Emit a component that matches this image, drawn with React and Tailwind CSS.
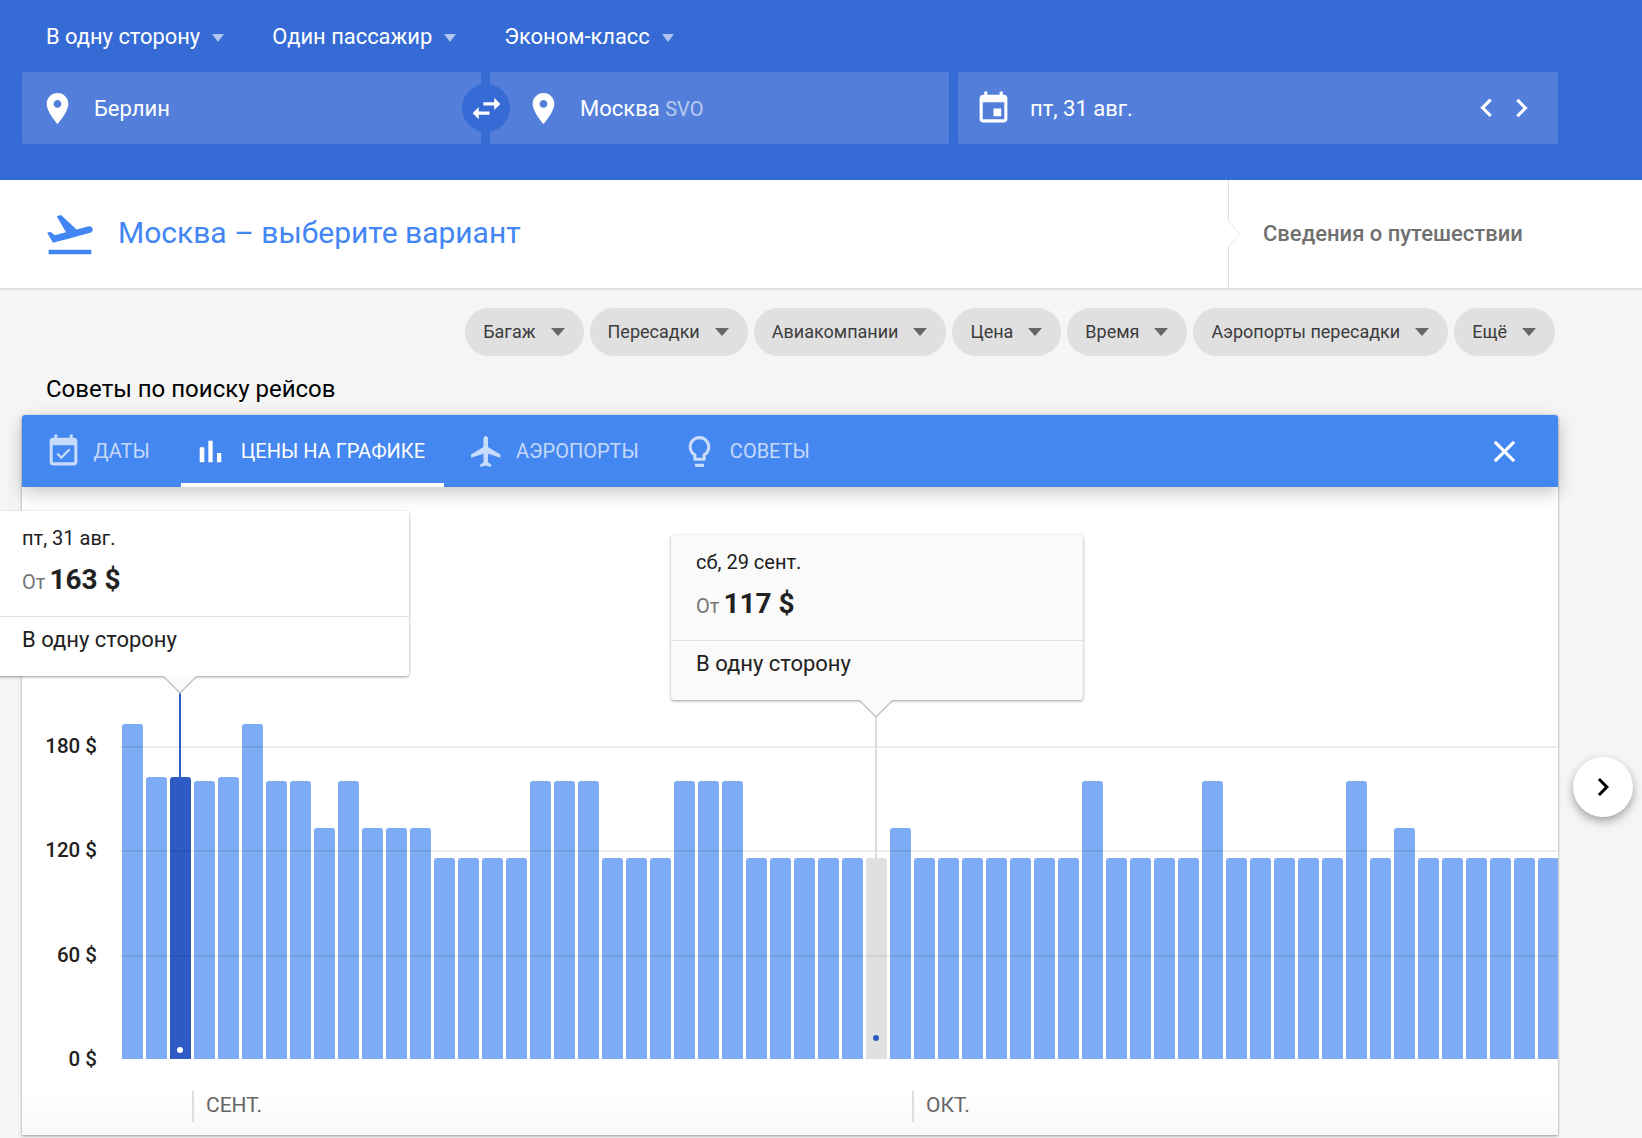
const place = 'M12 2C8.13 2 5 5.13 5 9c0 5.25 7 13 7 13s7-7.75 7-13c0-3.87-3.13-7-7-7zm0 9.5c-1.38 0-2.5-1.12-2.5-2.5s1.12-2.5 2.5-2.5 2.5 1.12 2.5 2.5-1.12 2.5-2.5 2.5z'
const swap = 'M6.99 11L3 15l3.99 4v-3H14v-2H6.99v-3zM21 9l-3.99-4v3H10v2h7.01v3L21 9z'
const event = 'M17 12h-5v5h5v-5zM16 1v2H8V1H6v2H5c-1.11 0-1.99.9-1.99 2L3 19c0 1.1.89 2 2 2h14c1.1 0 2-.9 2-2V5c0-1.1-.9-2-2-2h-1V1h-2zm3 18H5V8h14v11z'
const arrowLeft = 'M15.41 16.09l-4.58-4.59 4.58-4.59L14 5.5l-6 6 6 6z'
const arrowRight = 'M8.59 16.34l4.58-4.59-4.58-4.59L10 5.75l6 6-6 6z'
const takeoff = 'M2.5 19h19v2h-19zm19.57-9.36c-.21-.8-1.04-1.28-1.84-1.06L14.92 10l-6.9-6.43-1.93.51 4.14 7.17-4.97 1.33-1.97-1.54-1.45.39 1.82 3.16.77 1.33 1.6-.43 5.31-1.42 4.35-1.16L21 11.49c.81-.23 1.28-1.05 1.07-1.85z'
const eventAvailable = 'M16.53 11.06L15.47 10l-4.88 4.88-2.12-2.12-1.06 1.06L10.59 17l5.94-5.94zM19 3h-1V1h-2v2H8V1H6v2H5c-1.11 0-1.99.9-1.99 2L3 19c0 1.1.89 2 2 2h14c1.1 0 2-.9 2-2V5c0-1.1-.9-2-2-2zm0 16H5V8h14v11z'
const barChart = 'M5 9.2h3V19H5zM10.6 5h2.8v14h-2.8zm5.6 8H19v6h-2.8z'
const flight = 'M21 16v-2l-8-5V3.5c0-.83-.67-1.5-1.5-1.5S10 2.67 10 3.5V9l-8 5v2l8-2.5V19l-2 1.5V22l3.5-1 3.5 1v-1.5L13 19v-5.5l8 2.5z'
const bulb = 'M9 21c0 .55.45 1 1 1h4c.55 0 1-.45 1-1v-1H9v1zm3-19C8.14 2 5 5.14 5 9c0 2.38 1.19 4.47 3 5.74V17c0 .55.45 1 1 1h6c.55 0 1-.45 1-1v-2.26c1.81-1.27 3-3.36 3-5.74 0-3.86-3.14-7-7-7zm2.85 11.1l-.85.6V16h-4v-2.3l-.85-.6C7.8 12.16 7 10.63 7 9c0-2.76 2.24-5 5-5s5 2.24 5 5c0 1.63-.8 3.16-2.15 4.1z'
const close = 'M19 6.41L17.59 5 12 10.59 6.41 5 5 6.41 10.59 12 5 17.59 6.41 19 12 13.41 17.59 19 19 17.59 13.41 12z'
const chevron = 'M10 6L8.59 7.41 13.17 12l-4.58 4.59L10 18l6-6z'

function Icon({ d, className }) {
  return (
    <svg viewBox="0 0 24 24" fill="currentColor" className={className}>
      <path d={d} />
    </svg>
  )
}

// tops of the bars, in px above the axis
const H = 335
const A = 282
const B = 278
const C = 231
const D = 201
const bars = [
  H, A, A, B, A, H, B, B, C, B, C, C, C,
  D, D, D, D, B, B, B, D, D, D, B, B, B,
  D, D, D, D, D, D, C, D, D, D, D, D, D, D,
  B, D, D, D, D, B, D, D, D, D, D, B, D, C,
  D, D, D, D, D, D,
]

const filters = ['Багаж', 'Пересадки', 'Авиакомпании', 'Цена', 'Время', 'Аэропорты пересадки', 'Ещё']

const tabs = [
  { label: 'ДАТЫ', icon: eventAvailable },
  { label: 'ЦЕНЫ НА ГРАФИКЕ', icon: barChart, active: true },
  { label: 'АЭРОПОРТЫ', icon: flight },
  { label: 'СОВЕТЫ', icon: bulb },
]

const yLabels = [
  { label: '180 $', top: 259 },
  { label: '120 $', top: 363 },
  { label: '60 $', top: 468 },
  { label: '0 $', top: 572 },
]

function Dropdown({ label, className }) {
  return (
    <div className={`flex items-center gap-[12px] ${className}`}>
      <span className="text-[21.9px] leading-[28px] text-white">{label}</span>
      <span className="w-0 h-0 mt-[2px] border-x-[6px] border-x-transparent border-t-[8px] border-t-white/60" />
    </div>
  )
}

function Tooltip({ date, price, className, bg, arrowLeftPx }) {
  return (
    <div className={`absolute z-20 w-[412px] h-[165px] rounded-[3px] shadow-[0_1px_3px_rgba(0,0,0,0.4)] ${bg} ${className}`}>
      <div className="h-[106px] px-[25px] pt-[15px] border-b border-[#e0e0e0]">
        <div className="text-[20px] leading-[24px] text-[#212121]">{date}</div>
        <div className="mt-[12px] flex items-baseline gap-[4px] leading-[36px]">
          <span className="text-[20px] text-[#757575]">От</span>
          <span className="text-[28px] font-bold text-[#212121]">{price}</span>
        </div>
      </div>
      <div className="px-[25px] pt-[11px] text-[22px] leading-[24px] text-[#212121]">В одну сторону</div>
      <svg viewBox="0 0 34 18" className={`absolute top-full w-[34px] h-[18px] ${arrowLeftPx}`}>
        <polygon points="0,0 17,17 34,0" fill="#fafafa" />
        <polyline points="0,0 17,17 34,0" fill="none" stroke="#c4c4c4" strokeWidth="1.5" />
      </svg>
    </div>
  )
}

export default function App() {
  return (
    <div className="relative w-[1642px] h-[1138px] overflow-hidden bg-[#f5f5f5] font-['Roboto',sans-serif]">
      <header className="h-[180px] bg-[#366bd6]">
        <div className="h-[72px] flex items-center pl-[46px] pt-[2px]">
          <Dropdown label="В одну сторону" className="mr-[48px]" />
          <Dropdown label="Один пассажир" className="mr-[48px]" />
          <Dropdown label="Эконом-класс" />
        </div>
        <div className="flex pl-[22px] gap-[9px]">
          <div className="relative w-[459px] h-[72px] flex items-center pl-[17px] gap-[18px] bg-[#537fdb] rounded-[3px]">
            <Icon d={place} className="w-[37px] h-[37px] text-white" />
            <span className="mt-px text-[22px] text-white">Берлин</span>
            <div className="absolute z-10 right-[-29px] top-[12px] w-[48px] h-[48px] rounded-full bg-[#366bd6] flex items-center justify-center">
              <Icon d={swap} className="w-[37px] h-[37px] text-white" />
            </div>
          </div>
          <div className="w-[459px] h-[72px] flex items-center pl-[35px] gap-[18px] bg-[#537fdb] rounded-[3px]">
            <Icon d={place} className="w-[37px] h-[37px] text-white" />
            <span className="mt-px text-[22px] text-white">
              Москва <span className="text-[20px] text-white/60">SVO</span>
            </span>
          </div>
          <div className="w-[600px] h-[72px] flex items-center pl-[17px] pr-[18px] bg-[#537fdb] rounded-[3px]">
            <Icon d={event} className="w-[37px] h-[37px] text-white" />
            <span className="mt-px ml-[18px] text-[22px] text-white">пт, 31 авг.</span>
            <Icon d={arrowLeft} className="ml-auto w-[37px] h-[37px] text-white" />
            <Icon d={arrowRight} className="-ml-[2px] w-[37px] h-[37px] text-white" />
          </div>
        </div>
      </header>

      <div className="h-[110px] flex justify-between bg-white border-b-2 border-[#e0e0e0]">
        <div className="flex items-center pl-[43px] gap-[21px]">
          <Icon d={takeoff} className="w-[54px] h-[54px] text-[#4285f4]" />
          <h1 className="mb-[3px] text-[30px] text-[#4285f4]">Москва – выберите вариант</h1>
        </div>
        <div className="relative w-[414px] flex items-center pl-[34px] pb-[2px] border-l border-[#e0e0e0]">
          <svg viewBox="0 0 14 26" className="absolute -left-px top-[41px] w-[14px] h-[26px]">
            <polygon points="0,0 12,13 0,26" fill="#fff" />
            <polyline points="0,0 12,13 0,26" fill="none" stroke="#e6e6e6" strokeWidth="1" />
          </svg>
          <span className="text-[22px] font-medium text-[#707070]">Сведения о путешествии</span>
        </div>
      </div>

      <div className="flex justify-end gap-[6px] pt-[18px] pr-[87px]">
        {filters.map(f => (
          <div key={f} className="h-[48px] flex items-center gap-[15px] pl-[18px] pr-[19px] pb-[2px] rounded-[24px] bg-[#e0e0e0]">
            <span className="text-[18px] text-[#3c3c3c]">{f}</span>
            <span className="w-0 h-0 mt-[2px] border-x-[7px] border-x-transparent border-t-[8px] border-t-[#666666]" />
          </div>
        ))}
      </div>

      <h2 className="pl-[46px] pt-[20px] text-[24px] leading-[26px] text-black">Советы по поиску рейсов</h2>

      <section className="mt-[13px] ml-[22px] w-[1536px] h-[720px] rounded-t-[3px] bg-white shadow-[0_1px_3px_rgba(0,0,0,0.4)]">
        <div className="relative z-10 h-[72px] flex items-center gap-[13px] pl-[12px] pr-[35px] bg-[#4587f0] rounded-t-[3px] shadow-[0_6px_18px_rgba(0,0,0,0.22)]">
          {tabs.map(t => (
            <div
              key={t.label}
              className={`h-full flex items-center gap-[11.5px] pl-[11px] pr-[18.5px] border-y-4 border-t-transparent ${t.active ? 'border-b-white text-white' : 'border-b-transparent text-white/70'}`}
            >
              <Icon d={t.icon} className="w-[37px] h-[37px]" />
              <span className="text-[20px]">{t.label}</span>
            </div>
          ))}
          <Icon d={close} className="ml-auto w-[37px] h-[37px] text-white" />
        </div>

        <div className="relative">
          <div className="h-[572px] flex items-end gap-[3px] pl-[100px] overflow-hidden">
            {bars.map((h, i) => (
              <div
                key={i}
                className={`relative shrink-0 w-[21px] rounded-t-[3px] ${i === 2 ? 'bg-[#2d5ac3]' : i === 31 ? 'bg-[#e0e0e0]' : 'bg-[#7dabf4]'}`}
                style={{ height: h }}
              >
                {i === 2 && <span className="absolute left-[7px] bottom-[6px] w-[6px] h-[6px] rounded-full bg-white" />}
                {i === 31 && <span className="absolute left-[7px] bottom-[18px] w-[6px] h-[6px] rounded-full bg-[#2d5ac3]" />}
              </div>
            ))}
          </div>

          {yLabels.slice(0, 3).map(l => (
            <div key={l.top} className="absolute left-[98px] right-0 h-[1.5px] bg-black/[0.07]" style={{ top: l.top }} />
          ))}
          {yLabels.map(l => (
            <div
              key={l.label}
              className="absolute right-[1461px] -translate-y-1/2 whitespace-nowrap text-[20.5px] font-medium text-[#212121]"
              style={{ top: l.top - 0.5 }}
            >
              {l.label}
            </div>
          ))}

          <div className="absolute left-[157px] top-[206px] w-[2px] h-[84px] bg-[#2d5ac3]" />
          <div className="absolute left-[853px] top-[230px] w-[2px] h-[141px] bg-[#dddddd]" />

          <Tooltip date="пт, 31 авг." price="163 $" className="left-[-25px] top-[24px]" bg="bg-white" arrowLeftPx="left-[166px]" />
          <Tooltip date="сб, 29 сент." price="117 $" className="left-[649px] top-[48px]" bg="bg-[#fafafa]" arrowLeftPx="left-[188px]" />

          <button className="absolute z-20 left-[1551px] top-[270px] w-[60px] h-[60px] rounded-full bg-white flex items-center justify-center shadow-[0_4px_10px_rgba(0,0,0,0.35)]">
            <Icon d={chevron} className="w-[36px] h-[36px] text-black" />
          </button>

          <div className="h-[76px] flex pt-[32px] pl-[170px] bg-gradient-to-b from-white from-[40%] to-[#f8f8f8]">
            <div className="w-[720px] h-[31px] flex items-center border-l-2 border-[#dddddd] pl-[12px] pb-[2px]">
              <span className="text-[21px] text-[#666666]">СЕНТ.</span>
            </div>
            <div className="h-[31px] flex items-center border-l-2 border-[#dddddd] pl-[12px] pb-[2px]">
              <span className="text-[21px] text-[#666666]">ОКТ.</span>
            </div>
          </div>
        </div>
      </section>
    </div>
  )
}
